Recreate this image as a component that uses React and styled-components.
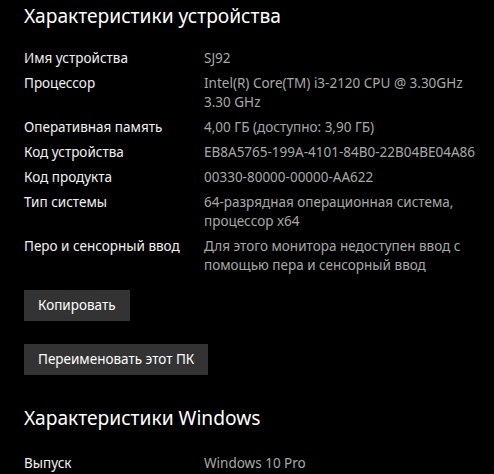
import React from 'react'
import styled, { createGlobalStyle } from 'styled-components';

const GlobalStyle = createGlobalStyle`
    html, body {
        margin: 0;
        padding: 0;
        background: #000;
    }
    body {
        font-family: "Noto Sans", "Open Sans", sans-serif;
        color: #fff;
        overflow: hidden;
    }
`;

const deviceSpecs = [
    { label: 'Имя устройства', value: 'SJ92' },
    { label: 'Процессор', value: 'Intel(R) Core(TM) i3-2120 CPU @ 3.30GHz 3.30 GHz' },
    { label: 'Оперативная память', value: '4,00 ГБ (доступно: 3,90 ГБ)' },
    { label: 'Код устройства', value: 'EB8A5765-199A-4101-84B0-22B04BE04A86' },
    { label: 'Код продукта', value: '00330-80000-00000-AA622' },
    { label: 'Тип системы', value: '64-разрядная операционная система, процессор x64' },
    { label: 'Перо и сенсорный ввод', value: 'Для этого монитора недоступен ввод с помощью пера и сенсорный ввод' },
];

const windowsSpecs = [
    { label: 'Выпуск', value: 'Windows 10 Pro' },
];

const App = () => {
    return (
        <Page>
            <GlobalStyle />
            <Heading>Характеристики устройства</Heading>
            <SpecList>
                {deviceSpecs.map((s) => (
                    <SpecRow key={s.label}>
                        <Label>{s.label}</Label>
                        <Value>{s.value}</Value>
                    </SpecRow>
                ))}
            </SpecList>
            <Actions>
                <Button>Копировать</Button>
                <Button>Переименовать этот ПК</Button>
            </Actions>
            <Heading $second>Характеристики Windows</Heading>
            <SpecList $second>
                {windowsSpecs.map((s) => (
                    <SpecRow key={s.label}>
                        <Label>{s.label}</Label>
                        <Value>{s.value}</Value>
                    </SpecRow>
                ))}
            </SpecList>
        </Page>
    )
}

const Page = styled.div`
    padding: 0 0 0 24px;
    width: 494px;
    box-sizing: border-box;
`;

const Heading = styled.h1`
    margin: ${p => p.$second ? '29px 0 0' : '2px 0 0'};
    font-size: 19.2px;
    font-weight: 400;
    line-height: 28px;
    color: #fff;
`;

const SpecList = styled.div`
    display: flex;
    flex-direction: column;
    gap: 6px;
    margin-top: ${p => p.$second ? '22px' : '19px'};
`;

const SpecRow = styled.div`
    display: grid;
    grid-template-columns: 180px 282px;
    font-size: 13.5px;
    line-height: 19px;
`;

const Label = styled.div`
    color: #f2f2f2;
`;

const Value = styled.div`
    color: #a8a8a8;
`;

const Actions = styled.div`
    display: flex;
    flex-direction: column;
    align-items: flex-start;
    gap: 23px;
    margin-top: 15px;
`;

const Button = styled.button`
    height: 31px;
    padding: 0 14px 1px;
    border: none;
    background: #333333;
    color: #fff;
    font-family: inherit;
    font-size: 13.5px;
`;

export default App
